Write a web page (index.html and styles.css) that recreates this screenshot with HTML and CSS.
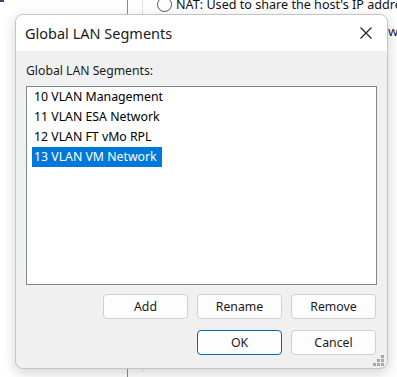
FILE: index.html
```html
<!DOCTYPE html>
<html lang="en">
<head>
  <meta charset="UTF-8">
  <title>Global LAN Segments</title>
  <link rel="stylesheet" href="styles.css">
</head>
<body>
  <!-- settings window behind the dialog -->
  <div class="backdrop">
    <div class="side"><span class="tick"></span></div>
    <div class="pane">
      <div class="group">
        <div class="opt">
          <span class="radio"></span>
          <span>NAT: Used to share the host's IP addre</span>
        </div>
        <div class="opt-desc">wi</div>
      </div>
    </div>
  </div>

  <!-- dialog -->
  <div class="dialog">
    <div class="titlebar">
      <span class="title">Global LAN Segments</span>
      <svg class="close" width="12" height="12" viewBox="0 0 12 12">
        <path d="M0.5 0.5 L11.5 11.5 M11.5 0.5 L0.5 11.5" stroke="#1a1a1a" stroke-width="1.1" fill="none"/>
      </svg>
    </div>
    <div class="content">
      <div class="label">Global LAN Segments:</div>
      <div class="listbox">
        <div class="item"><span>10 VLAN Management</span></div>
        <div class="item"><span>11 VLAN ESA Network</span></div>
        <div class="item"><span>12 VLAN FT vMo RPL</span></div>
        <div class="item selected"><span>13 VLAN VM Network</span></div>
      </div>
      <div class="btn-row">
        <button class="btn">Add</button>
        <button class="btn">Rename</button>
        <button class="btn">Remove</button>
      </div>
      <div class="btn-row second">
        <button class="btn default">OK</button>
        <button class="btn">Cancel</button>
      </div>
    </div>
    <div class="grip">
      <i></i><i></i><i></i><i></i><i></i><i></i>
    </div>
  </div>
</body>
</html>
```

FILE: styles.css
```css
body {
  margin: 0;
  width: 397px;
  height: 377px;
  overflow: hidden;
  background: #fff;
  font-family: 'Noto Sans', 'Open Sans', sans-serif;
  position: relative;
}

/* background window */
.backdrop {
  display: flex;
  height: 377px;
}

.side {
  width: 127px;
  border-right: 1px solid #8c8c8c;
  position: relative;
}

.tick {
  position: absolute;
  left: 0;
  top: 0;
  width: 4px;
  height: 2px;
  background: #3a4a7a;
}

.pane {
  flex: 1;
  padding-left: 14px;
  overflow: hidden;
}

.group {
  border-left: 1px solid #e3e3e3;
  padding-left: 14px;
  height: 100%;
}

.opt {
  display: flex;
  align-items: center;
  gap: 4px;
  margin-top: -5px;
  font-size: 12.6px;
  color: #111;
  white-space: nowrap;
  height: 18px;
}

.radio {
  width: 13px;
  height: 13px;
  border: 1px solid #555;
  border-radius: 50%;
  flex: none;
}

.opt-desc {
  font-size: 13px;
  color: #222250;
  white-space: nowrap;
  padding-left: 231px;
  margin-top: 9px;
}

/* dialog */
.dialog {
  position: absolute;
  left: 15px;
  top: 14px;
  width: 371px;
  height: 353px;
  border: 1px solid #c4c4c4;
  border-radius: 8px;
  background: #f0f0f0;
  box-shadow: 0 4px 14px rgba(0, 0, 0, 0.18);
  overflow: hidden;
  display: flex;
  flex-direction: column;
}

.titlebar {
  height: 36px;
  background: #fff;
  display: flex;
  align-items: center;
  justify-content: space-between;
  padding: 0 15px 0 9px;
  flex: none;
}

.title {
  font-size: 14.5px;
  color: #1a1a1a;
}

.content {
  padding: 12px 10px 0 10px;
  display: flex;
  flex-direction: column;
}

.label {
  font-size: 12.2px;
  color: #1a1a1a;
  line-height: 16px;
}

.listbox {
  margin-top: 7px;
  height: 197px;
  background: #fff;
  border: 1px solid #82868e;
}

.item {
  height: 20px;
  padding-left: 5px;
  display: flex;
  align-items: center;
}

.item span {
  font-size: 12.3px;
  color: #000;
  padding: 0 2px;
  line-height: 20px;
}

.item.selected span {
  background: #0078d7;
  color: #fff;
  padding-right: 5px;
}

.btn-row {
  display: flex;
  justify-content: flex-end;
  gap: 9px;
  margin-top: 9px;
  padding-right: 1px;
}

.btn-row.second {
  margin-top: 11px;
}

.btn {
  width: 85px;
  height: 25px;
  background: #fdfdfd;
  border: 1px solid #d0d0d0;
  border-radius: 4px;
  font-family: 'Noto Sans', 'Open Sans', sans-serif;
  font-size: 12.3px;
  color: #1a1a1a;
  padding: 0;
}

.btn.default {
  border-color: #0067c0;
}

.grip {
  position: absolute;
  right: 3px;
  bottom: 2px;
  width: 11px;
  height: 11px;
}

.grip i {
  position: absolute;
  width: 3px;
  height: 3px;
  background: #a8a8a8;
}

.grip i:nth-child(1) { right: 0; top: 0; }
.grip i:nth-child(2) { right: 4px; top: 4px; }
.grip i:nth-child(3) { right: 0; top: 4px; }
.grip i:nth-child(4) { right: 8px; top: 8px; }
.grip i:nth-child(5) { right: 4px; top: 8px; }
.grip i:nth-child(6) { right: 0; top: 8px; }
```
